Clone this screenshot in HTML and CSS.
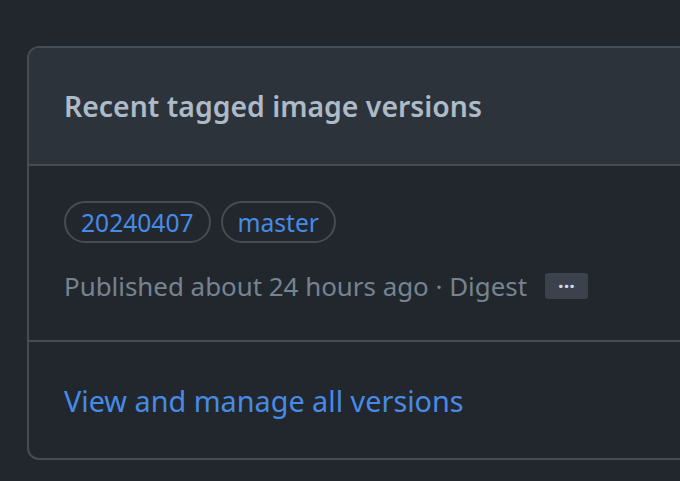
FILE: index.html
```html
<!DOCTYPE html>
<html>
<head>
<meta charset="utf-8">
<link rel="stylesheet" href="styles.css">
</head>
<body>
<div class="page">
  <div class="box">
    <div class="box-header">
      <h3 class="box-title">Recent tagged image versions</h3>
    </div>
    <div class="box-row">
      <div class="labels">
        <a class="label" href="#">20240407</a>
        <a class="label" href="#">master</a>
      </div>
      <div class="meta">
        <span>Published about 24 hours ago · Digest</span>
        <button class="ellipsis" type="button">&middot;&middot;&middot;</button>
      </div>
    </div>
    <div class="box-footer">
      <a class="link" href="#">View and manage all versions</a>
    </div>
  </div>
</div>
</body>
</html>
```
FILE: styles.css
```css
html, body {
  margin: 0;
  padding: 0;
  background: #22272e;
  overflow: hidden;
}
body {
  width: 680px;
  height: 481px;
  font-family: "Noto Sans", "Open Sans", sans-serif;
}
.page {
  padding: 46px 0 0 27px;
}
.box {
  width: 720px;
  border: 2px solid #444c56;
  border-radius: 12px;
  overflow: hidden;
}
.box-header {
  background: #2d333b;
  height: 116px;
  padding: 0 35px;
  display: flex;
  align-items: center;
  border-bottom: 2px solid #444c56;
}
.box-title {
  margin: 0;
  font-size: 28.4px;
  font-weight: 600;
  color: #adbac7;
}
.box-row {
  height: 176px;
  padding: 35px 35px 0;
  box-sizing: border-box;
  border-bottom: 2px solid #444c56;
}
.labels {
  display: flex;
  gap: 10px;
}
.label {
  height: 42px;
  box-sizing: border-box;
  border: 2px solid #444c56;
  border-radius: 21px;
  padding: 0 15px;
  display: flex;
  align-items: center;
  font-size: 24.6px;
  color: #478be6;
  text-decoration: none;
}
.meta {
  margin-top: 25px;
  display: flex;
  align-items: center;
  font-size: 25.9px;
  color: #768390;
}
.ellipsis {
  margin-left: 18px;
  width: 43px;
  height: 26px;
  border: 0;
  border-radius: 3px;
  background: #3b424c;
  color: #cdd9e5;
  font-size: 20px;
  font-weight: 700;
  line-height: 26px;
  padding: 0;
  font-family: inherit;
}
.box-footer {
  height: 116px;
  padding: 0 35px;
  display: flex;
  align-items: center;
}
.link {
  font-size: 28.8px;
  color: #478be6;
  text-decoration: none;
}
```
